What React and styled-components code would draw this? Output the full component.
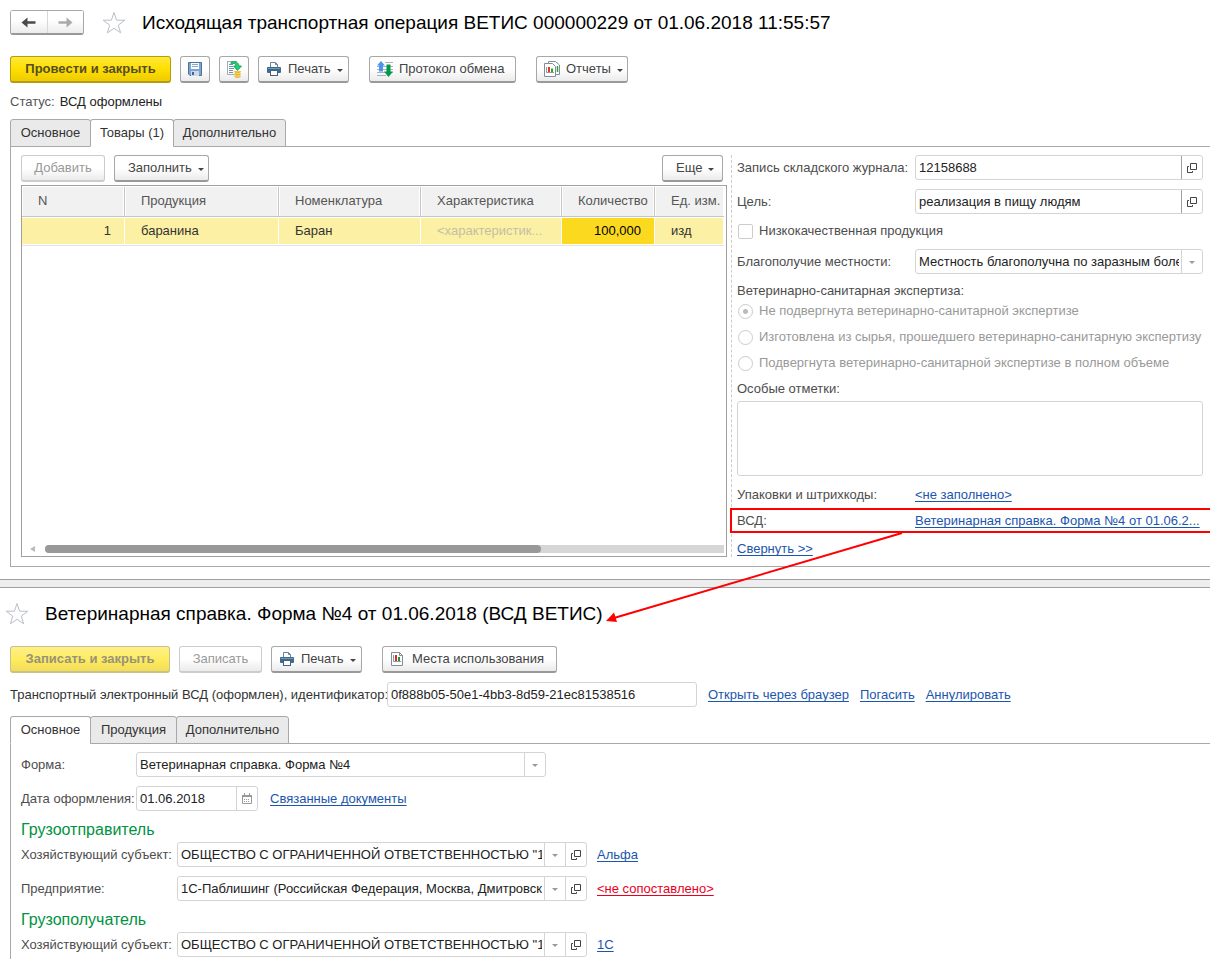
import { useState } from "react";
import styled, { createGlobalStyle, css } from "styled-components";

const GlobalStyle = createGlobalStyle`
  * {
    box-sizing: border-box;
  }

  body {
    margin: 0;
    background: #fff;
    color: #333;
    font-family: "Liberation Sans", Arial, sans-serif;
    font-size: 13px;
    line-height: 16px;
    overflow-x: hidden;
  }

  button, input, select, textarea {
    font: inherit;
    color: inherit;
  }
`;

const Window = styled.main`
  padding-left: 10px;
`;

const Splitter = styled.div`
  height: 9px;
  margin-top: 12px;
  border: 1px solid #a0a0a0;
  border-width: 1px 0;
  background: #eee;
`;

const Header = styled.header`
  display: flex;
  align-items: center;
  padding-top: ${(props) => props.$top}px;
  margin-left: ${(props) => props.$shift || 0}px;
`;

const NavButtons = styled.div`
  display: flex;
  width: 74px;
  height: 25px;
  margin-right: 18px;
  border: 1px solid #a8a8a8;
  border-bottom: 2px solid #999;
  border-radius: 3px;
`;

const NavButton = styled.button`
  flex: 1;
  display: flex;
  align-items: center;
  justify-content: center;
  padding: 0;
  border: none;
  background: linear-gradient(#fff 40%, #ececec);

  & + & {
    border-left: 1px solid #d8d8d8;
  }
`;

const StarButton = styled.button`
  display: flex;
  padding: 0;
  margin-right: 16px;
  border: none;
  background: none;
`;

const Title = styled.h1`
  margin: 0;
  color: #000;
  font-size: 19px;
  font-weight: 400;
  line-height: 27px;
  white-space: nowrap;
`;

const Toolbar = styled.div`
  display: flex;
  align-items: center;
  gap: ${(props) => props.$gap || 9}px;
  padding-top: ${(props) => props.$top}px;
`;

const Button = styled.button`
  flex: none;
  display: flex;
  align-items: center;
  justify-content: ${(props) => (props.$start ? "flex-start" : "center")};
  gap: 5px;
  height: 27px;
  width: ${(props) => props.$width}px;
  padding: 0 0 0 ${(props) => ({ icon: 6, text: 13 })[props.$start] || 0}px;
  border: 1px solid #a8a8a8;
  border-bottom: 2px solid #999;
  border-radius: 3px;
  background: linear-gradient(#fff 50%, #ebebeb);
  color: #444;
  white-space: nowrap;

  &:disabled {
    border-color: #ccc;
    color: #999;
  }

  ${(props) =>
    props.$primary &&
    css`
      border-color: #b39b12;
      background: linear-gradient(#ffe838, #ffdf00 50%, #eecb00);
      color: #544d26;
      font-weight: 700;

      &:disabled {
        border-color: #c9c08a;
        background: linear-gradient(#fff08a, #ffec60 50%, #f2dd58);
        color: #98927a;
      }
    `}
`;

const Gap = styled.span`
  width: ${(props) => props.$size}px;
`;

const Caret = styled.i`
  flex: none;
  border: 3px solid transparent;
  border-top-color: ${(props) => props.$color || "#444"};
  border-bottom: none;
  margin-top: 2px;

  ${Button} & {
    margin-left: 1px;
  }
`;

const Status = styled.p`
  margin: 11px 0 0;
  color: #222;

  span {
    margin-right: 5px;
    color: #555;
  }
`;

const Tabs = styled.div`
  display: flex;
  position: relative;
  margin-top: 9px;
  margin-bottom: -1px;
`;

const Tab = styled.button`
  height: 28px;
  padding: 0;
  width: ${(props) => props.$width}px;
  border: 1px solid #a8a8a8;
  border-bottom-color: ${(props) => (props.$active ? "#fff" : "#a8a8a8")};
  border-radius: 3px 3px 0 0;
  background: ${(props) => (props.$active ? "#fff" : "#eaeaea")};
  color: #333;

  & + & {
    margin-left: -1px;
  }
`;

const Page = styled.section`
  border: 1px solid #a8a8a8;
  border-right: none;
  padding: 8px 0 9px 10px;
`;

const Split = styled.div`
  display: flex;
  gap: 4px;
`;

const Goods = styled.div`
  flex: 1;
  min-width: 0;
  display: flex;
  flex-direction: column;
`;

const CommandBar = styled.div`
  display: flex;
  gap: 9px;
  padding-right: 4px;
  margin-bottom: 3px;

  & > :last-child {
    margin-left: auto;
  }
`;

const TableBox = styled.div`
  flex: 1;
  display: flex;
  flex-direction: column;
  justify-content: space-between;
  padding: 1px 2px 3px 0;
  border: 1px solid #a0a0a0;
`;

const Table = styled.table`
  width: 100%;
  table-layout: fixed;
  border-collapse: separate;
  border-spacing: 0;
`;

const Th = styled.th`
  height: 30px;
  padding: 0 0 2px 16px;
  border-right: 1px solid #c4c4c4;
  border-bottom: 1px solid #c4c4c4;
  background: #f1f1f1;
  box-shadow: inset 1px 0 #fff, inset -1px 0 #fff;
  color: #555;
  font-weight: 400;
  text-align: left;
  white-space: nowrap;

  &:last-child {
    border-right: none;
  }
`;

const Td = styled.td`
  height: 28px;
  padding: 0 ${(props) => (props.$number ? 13 : 0)}px 0 16px;
  border: 1px solid #fff;
  border-left: none;
  background: ${(props) => (props.$current ? "#fbd91f" : "#fcf0a4")};
  background-clip: padding-box;
  box-shadow: 0 1px #e4e4e4;
  color: ${(props) => (props.$muted ? "#c4bfa4" : props.$current ? "#000" : "#333")};
  text-align: ${(props) => (props.$number ? "right" : "left")};
  white-space: nowrap;
`;

const Scroller = styled.div`
  display: flex;
  align-items: center;
  height: 8px;
  margin-left: 8px;
`;

const ScrollArrow = styled.i`
  border: 3px solid transparent;
  border-right: 5px solid #bbb;
  border-left: none;
  margin-right: 10px;
`;

const ScrollTrack = styled.div`
  flex: 1;
  height: 8px;
  border-radius: 4px 0 0 4px;
  background: #d6d6d6;
`;

const ScrollThumb = styled.div`
  width: 73%;
  height: 8px;
  border-radius: 4px;
  background: #999;
`;

const Details = styled.div`
  flex: 0 0 479px;
  display: flex;
  flex-direction: column;
  padding: 0 7px 0 5px;
  border-left: 1px dashed #ccc;
`;

const Row = styled.div`
  display: flex;
  align-items: center;
  min-height: 25px;
  margin-bottom: 9px;
`;

const Label = styled.label`
  flex: none;
  width: ${(props) => props.$width || 178}px;
  color: ${(props) => (props.$dark ? "#333" : "#4d4d4d")};
  white-space: nowrap;
`;

const Caption = styled.div`
  margin-bottom: 4px;
  color: #4d4d4d;
`;

const FieldBox = styled.div`
  display: flex;
  flex: ${(props) => (props.$width ? `0 1 ${props.$width}px` : "1")};
  min-width: 0;
  height: 25px;
  border: 1px solid #d4d4d4;
  border-radius: 3px;
  background: #fff;
`;

const fieldText = css`
  flex: 1;
  min-width: 0;
  width: 100%;
  padding: 0 2px 0 3px;
  border: none;
  outline: none;
  background: none;
  color: #222;
`;

const Input = styled.input`
  ${fieldText}
`;

const Select = styled.select`
  ${fieldText}
  appearance: none;
`;

const FieldButton = styled.button`
  flex: none;
  display: flex;
  align-items: center;
  justify-content: center;
  width: 21px;
  padding: 0;
  border: none;
  border-left: 1px solid ${(props) => (props.$dark ? "#a0a0a0" : "#d4d4d4")};
  background: none;
`;

const CheckRow = styled.label`
  display: flex;
  align-items: center;
  gap: 6px;
  margin-bottom: 10px;
  color: ${(props) => (props.$disabled ? "#999" : "#4d4d4d")};
  white-space: nowrap;
`;

const Mark = styled.input`
  appearance: none;
  flex: none;
  width: 15px;
  height: 15px;
  margin: 0 0 0 1px;
  border: 1px solid #ccc;
  border-radius: ${(props) => (props.type === "radio" ? "50%" : "2px")};
  background: #fff;

  &:checked {
    background: radial-gradient(circle, #bbb 2px, #fff 3px);
  }
`;

const Notes = styled.textarea`
  display: block;
  width: 100%;
  height: 75px;
  margin: 4px 0 6px;
  border: 1px solid #d4d4d4;
  border-radius: 3px;
  resize: none;
`;

const Link = styled.a`
  color: ${(props) => (props.$alert ? "#e8001c" : "#1c55ae")};
  text-decoration: underline;
  text-decoration-skip-ink: none;
  text-underline-offset: 2px;
  white-space: nowrap;
`;

const Highlight = styled.div`
  position: relative;
  display: flex;
  align-items: center;
  height: 25px;
  margin: -8px 0 8px;

  &::before {
    content: "";
    position: absolute;
    inset: 0 -20px 0 -7px;
    border: 2px solid #f00;
    pointer-events: none;
  }
`;

const Pointer = styled.svg`
  position: absolute;
  top: 24px;
  left: -133px;
  pointer-events: none;
`;

const GroupTitle = styled.h2`
  margin: 10px 0 3px;
  color: #00923f;
  font-size: 16px;
  font-weight: 400;
  line-height: 18px;
`;

const FormPage = styled(Page)`
  border-bottom: none;
  padding-bottom: 2px;

  & > :last-child {
    margin-bottom: 0;
  }
`;

const Star = () => (
  <svg width="24" height="24" viewBox="0 0 24 24" fill="none" stroke="#b9bec6">
    <path d="M12 1.5 14.6 9.2H22.8L16.3 14.1 18.6 21.8 12 17.3 5.4 21.8 7.7 14.1 1.2 9.2H9.4Z" />
  </svg>
);

const ArrowIcon = ({ color, flip }) => (
  <svg width="15" height="11" viewBox="0 0 15 11">
    <path
      d={
        flip
          ? "M.5 4.2H8.500V.5L14.500 5.500 8.500 10.500V6.800H.5Z"
          : "M14.500 4.200H6.500V.5L.5 5.500 6.500 10.500V6.800H14.500Z"
      }
      fill={color}
    />
  </svg>
);

const SaveIcon = () => (
  <svg width="16" height="16" viewBox="0 0 16 16">
    <path d="M1.500 1.500H14.500V14.500H3L1.500 13Z" fill="#7ba5d2" stroke="#4c719b" />
    <rect x="4" y="2" width="8" height="6" fill="#fff" />
    <path d="M5 3.500H11M5 5.500H11" stroke="#8aa9c8" />
    <rect x="4" y="10" width="8" height="5" fill="#cfd9e4" />
    <rect x="5" y="11" width="2" height="3" fill="#41648e" />
  </svg>
);

const PostIcon = () => (
  <svg width="18" height="18" viewBox="0 0 18 18">
    <path d="M2 1.500H12M2.500 1.500V14.500H9" fill="none" stroke="#9dadba" />
    <path d="M4 4.500H8M4 6.500H8M4 8.500H9M4 10.500H8M4 12.500H8" stroke="#7890a4" />
    <path
      d="M6 2.200C10.500 .5 14 3 14 6H16.500L12.500 10.500 8.500 6H11C11 4 9 2.800 6 3.800Z"
      fill="#1fd07a"
      stroke="#0b9a4c"
      strokeWidth=".8"
    />
    <path d="M9.500 11V16C10.500 17.500 14.500 17.500 15.500 16V11Z" fill="#f8d55c" />
    <path
      d="M9.500 11.500C10.500 12.500 14.500 12.500 15.500 11.500M9.500 14C10.500 15 14.500 15 15.500 14M9.500 16.500C10.500 17.500 14.500 17.500 15.500 16.500"
      fill="none"
      stroke="#d9a520"
    />
  </svg>
);

const PrintIcon = () => (
  <svg width="18" height="18" viewBox="0 0 18 18">
    <path d="M5.500 7V2.500H10.500L12.500 4.500V7" fill="#fff" stroke="#6c8296" />
    <path d="M10.500 2.500V4.500H12.500" fill="none" stroke="#6c8296" />
    <rect x="2" y="7" width="14" height="6" rx="1" fill="#3e6a90" />
    <path d="M3 8.500H15" stroke="#6f97b8" />
    <rect x="5.500" y="10.500" width="7" height="5" fill="#fff" stroke="#4a6179" />
  </svg>
);

const ExchangeIcon = () => (
  <svg width="18" height="18" viewBox="0 0 18 18">
    <path
      d="M9 2.500H17M1 6.500H17M1 9.500H17M1 12.500H17M1 15.500H10"
      stroke="#a3b3c0"
    />
    <path d="M5 1 9 5.500H7V11.500H3V5.500H1Z" fill="#4d94ef" />
    <path d="M10.500 4.500H14.500V11.500H17L12.500 17 8 11.500H10.500Z" fill="#00984a" />
  </svg>
);

const ReportsIcon = () => (
  <svg width="18" height="18" viewBox="0 0 18 18">
    <path d="M5.500 3V1.500H12.500L16.500 5V14.500H13" fill="#fff" stroke="#7e8f9d" />
    <path d="M14.500 6V12" stroke="#2e9e3f" strokeWidth="1.500" />
    <path d="M1.500 3.500H9.500L12.500 6.500V16.500H1.500Z" fill="#fff" stroke="#7e8f9d" />
    <path d="M3.500 7V12.500H11" fill="none" stroke="#999" />
    <path d="M6 7V12" stroke="#e2361f" strokeWidth="2" />
    <path d="M9 8.500V12" stroke="#2e9e3f" strokeWidth="2" />
  </svg>
);

const UsageIcon = () => (
  <svg width="18" height="18" viewBox="0 0 18 18">
    <path d="M2.500 2.500H10.500L13.500 5.500V15.500H2.500Z" fill="#fff" stroke="#7e8f9d" />
    <path d="M10.500 2.500V5.500H13.500" fill="none" stroke="#7e8f9d" />
    <path d="M4.500 5V11.500H12" fill="none" stroke="#8d9aa6" />
    <path d="M7 5V11" stroke="#e02a20" strokeWidth="2" />
    <path d="M10 7V11" stroke="#22943a" strokeWidth="2" />
  </svg>
);

const OpenIcon = () => (
  <svg width="10" height="10" viewBox="0 0 10 10" fill="none" stroke="#444">
    <path d="M3.500 .5H9.500V6.500H3.500Z M2 3.500H.5V9.500H5.500V8" />
  </svg>
);

const CalendarIcon = () => (
  <svg width="10" height="11" viewBox="0 0 10 11">
    <path d="M.5 2.500H9.500V10.500H.5Z" fill="#fff" stroke="#999" />
    <path d="M0 2H10V4H0ZM2 0H3V2H2ZM7 0H8V2H7Z" fill="#999" />
    <path d="M2 6.500H8M2 8.500H8" stroke="#999" strokeDasharray="1 1" />
  </svg>
);

const Field = ({ id, value, width, options, open, dark, calendar }) => (
  <FieldBox $width={width}>
    {options ? (
      <Select id={id} defaultValue={options[0]}>
        {options.map((option) => (
          <option key={option}>{option}</option>
        ))}
      </Select>
    ) : (
      <Input id={id} type="text" defaultValue={value} />
    )}
    {options && (
      <FieldButton as="span" aria-hidden="true">
        <Caret $color="#999" />
      </FieldButton>
    )}
    {calendar && (
      <FieldButton type="button" aria-label="Выбрать дату">
        <CalendarIcon />
      </FieldButton>
    )}
    {open && (
      <FieldButton type="button" aria-label="Открыть" $dark={dark}>
        <OpenIcon />
      </FieldButton>
    )}
  </FieldBox>
);

const TabList = ({ tabs, initial }) => {
  const [active, setActive] = useState(initial);

  return (
    <Tabs role="tablist">
      {tabs.map((tab) => (
        <Tab
          key={tab.name}
          type="button"
          role="tab"
          aria-selected={active === tab.name}
          $active={active === tab.name}
          $width={tab.width}
          onClick={() => setActive(tab.name)}
        >
          {tab.name}
        </Tab>
      ))}
    </Tabs>
  );
};

const columns = [
  { name: "N", width: 103 },
  { name: "Продукция", width: 154 },
  { name: "Номенклатура", width: 142 },
  { name: "Характеристика", width: 141 },
  { name: "Количество", width: 93 },
  { name: "Ед. изм.", width: 69 },
];

const expertise = [
  "Не подвергнута ветеринарно-санитарной экспертизе",
  "Изготовлена из сырья, прошедшего ветеринарно-санитарную экспертизу",
  "Подвергнута ветеринарно-санитарной экспертизе в полном объеме",
];

const company = 'ОБЩЕСТВО С ОГРАНИЧЕННОЙ ОТВЕТСТВЕННОСТЬЮ "1С"';

const GoodsTable = () => (
  <TableBox>
    <Table>
      <colgroup>
        {columns.map((column) => (
          <col key={column.name} width={column.width} />
        ))}
      </colgroup>
      <thead>
        <tr>
          {columns.map((column) => (
            <Th key={column.name}>{column.name}</Th>
          ))}
        </tr>
      </thead>
      <tbody>
        <tr>
          <Td $number>1</Td>
          <Td>баранина</Td>
          <Td>Баран</Td>
          <Td $muted>&lt;характеристик...</Td>
          <Td $number $current>
            100,000
          </Td>
          <Td>изд</Td>
        </tr>
      </tbody>
    </Table>
    <Scroller>
      <ScrollArrow />
      <ScrollTrack>
        <ScrollThumb />
      </ScrollTrack>
    </Scroller>
  </TableBox>
);

const Operation = () => (
  <Window>
    <Header $top={9}>
      <NavButtons>
        <NavButton type="button" aria-label="Назад">
          <ArrowIcon color="#4a4a4a" />
        </NavButton>
        <NavButton type="button" aria-label="Вперед">
          <ArrowIcon color="#aaa" flip />
        </NavButton>
      </NavButtons>
      <StarButton type="button" aria-label="В избранное">
        <Star />
      </StarButton>
      <Title>
        Исходящая транспортная операция ВЕТИС 000000229 от 01.06.2018 11:55:57
      </Title>
    </Header>
    <Toolbar $top={20}>
      <Button type="button" $primary $width={161}>
        Провести и закрыть
      </Button>
      <Button type="button" aria-label="Записать" $width={30}>
        <SaveIcon />
      </Button>
      <Button type="button" aria-label="Провести" $width={30}>
        <PostIcon />
      </Button>
      <Button type="button" $start="icon" $width={91}>
        <PrintIcon /> Печать <Caret />
      </Button>
      <Gap $size={2} />
      <Button type="button" $start="icon" $width={147}>
        <ExchangeIcon /> Протокол обмена
      </Button>
      <Gap $size={2} />
      <Button type="button" $start="icon" $width={92}>
        <ReportsIcon /> Отчеты <Caret />
      </Button>
    </Toolbar>
    <Status>
      <span>Статус:</span>ВСД оформлены
    </Status>
    <TabList
      initial="Товары (1)"
      tabs={[
        { name: "Основное", width: 81 },
        { name: "Товары (1)", width: 84 },
        { name: "Дополнительно", width: 113 },
      ]}
    />
    <Page>
      <Split>
        <Goods>
          <CommandBar>
            <Button type="button" disabled $width={84}>
              Добавить
            </Button>
            <Button type="button" $start="text" $width={95}>
              Заполнить <Caret />
            </Button>
            <Button type="button" $start="text" $width={61}>
              Еще <Caret />
            </Button>
          </CommandBar>
          <GoodsTable />
        </Goods>
        <Details>
          <Row>
            <Label htmlFor="journal">Запись складского журнала:</Label>
            <Field id="journal" value="12158688" open dark />
          </Row>
          <Row>
            <Label htmlFor="purpose">Цель:</Label>
            <Field id="purpose" value="реализация в пищу людям" open dark />
          </Row>
          <CheckRow>
            <Mark type="checkbox" />
            Низкокачественная продукция
          </CheckRow>
          <Row>
            <Label htmlFor="area">Благополучие местности:</Label>
            <Field
              id="area"
              options={["Местность благополучна по заразным болезням"]}
            />
          </Row>
          <Caption>Ветеринарно-санитарная экспертиза:</Caption>
          {expertise.map((item, index) => (
            <CheckRow key={item} $disabled>
              <Mark
                type="radio"
                name="expertise"
                disabled
                defaultChecked={index === 0}
              />
              {item}
            </CheckRow>
          ))}
          <Label htmlFor="notes">Особые отметки:</Label>
          <Notes id="notes" />
          <Row>
            <Label as="span">Упаковки и штрихкоды:</Label>
            <Link href="#packages">&lt;не заполнено&gt;</Link>
          </Row>
          <Highlight>
            <Label as="span">ВСД:</Label>
            <Link href="#vsd">Ветеринарная справка. Форма №4 от 01.06.2...</Link>
            <Pointer width="300" height="94" viewBox="0 0 300 94">
              <path d="M298 1 10 86" stroke="#f00" strokeWidth="2" />
              <path d="M2 89 10 80.500 13 90Z" fill="#f00" />
            </Pointer>
          </Highlight>
          <div>
            <Link href="#collapse">Свернуть &gt;&gt;</Link>
          </div>
        </Details>
      </Split>
    </Page>
  </Window>
);

const Certificate = () => (
  <Window as="section">
    <Header $top={12} $shift={-5}>
      <StarButton type="button" aria-label="В избранное">
        <Star />
      </StarButton>
      <Title as="h2">
        Ветеринарная справка. Форма №4 от 01.06.2018 (ВСД ВЕТИС)
      </Title>
    </Header>
    <Toolbar $top={19}>
      <Button type="button" $primary disabled $width={160}>
        Записать и закрыть
      </Button>
      <Button type="button" disabled $width={83}>
        Записать
      </Button>
      <Button type="button" $start="icon" $width={91}>
        <PrintIcon /> Печать <Caret />
      </Button>
      <Gap $size={2} />
      <Button type="button" $start="icon" $width={175}>
        <UsageIcon /> Места использования
      </Button>
    </Toolbar>
    <Toolbar $top={9} $gap={11}>
      <Label htmlFor="vsd-id" $width={366} $dark>
        Транспортный электронный ВСД (оформлен), идентификатор:
      </Label>
      <Field
        id="vsd-id"
        value="0f888b05-50e1-4bb3-8d59-21ec81538516"
        width={310}
      />
      <Link href="#browser">Открыть через браузер</Link>
      <Link href="#redeem">Погасить</Link>
      <Link href="#cancel">Аннулировать</Link>
    </Toolbar>
    <TabList
      initial="Основное"
      tabs={[
        { name: "Основное", width: 81 },
        { name: "Продукция", width: 87 },
        { name: "Дополнительно", width: 113 },
      ]}
    />
    <FormPage>
      <Row>
        <Label htmlFor="form" $width={115}>
          Форма:
        </Label>
        <Field
          id="form"
          width={410}
          options={["Ветеринарная справка. Форма №4"]}
        />
      </Row>
      <Row>
        <Label htmlFor="date" $width={115}>
          Дата оформления:
        </Label>
        <Field id="date" value="01.06.2018" width={122} calendar />
        <Gap $size={12} />
        <Link href="#related">Связанные документы</Link>
      </Row>
      <GroupTitle>Грузоотправитель</GroupTitle>
      <Row>
        <Label htmlFor="sender" $width={156}>
          Хозяйствующий субъект:
        </Label>
        <Field id="sender" width={410} options={[company]} open />
        <Gap $size={10} />
        <Link href="#alfa">Альфа</Link>
      </Row>
      <Row>
        <Label htmlFor="enterprise" $width={156}>
          Предприятие:
        </Label>
        <Field
          id="enterprise"
          width={410}
          options={[
            "1С-Паблишинг (Российская Федерация, Москва, Дмитровское шоссе)",
          ]}
          open
        />
        <Gap $size={10} />
        <Link href="#unmatched" $alert>
          &lt;не сопоставлено&gt;
        </Link>
      </Row>
      <GroupTitle>Грузополучатель</GroupTitle>
      <Row>
        <Label htmlFor="receiver" $width={156}>
          Хозяйствующий субъект:
        </Label>
        <Field id="receiver" width={410} options={[company]} open />
        <Gap $size={10} />
        <Link href="#1c">1С</Link>
      </Row>
    </FormPage>
  </Window>
);

const App = () => (
  <>
    <GlobalStyle />
    <Operation />
    <Splitter />
    <Certificate />
  </>
);

export default App;
